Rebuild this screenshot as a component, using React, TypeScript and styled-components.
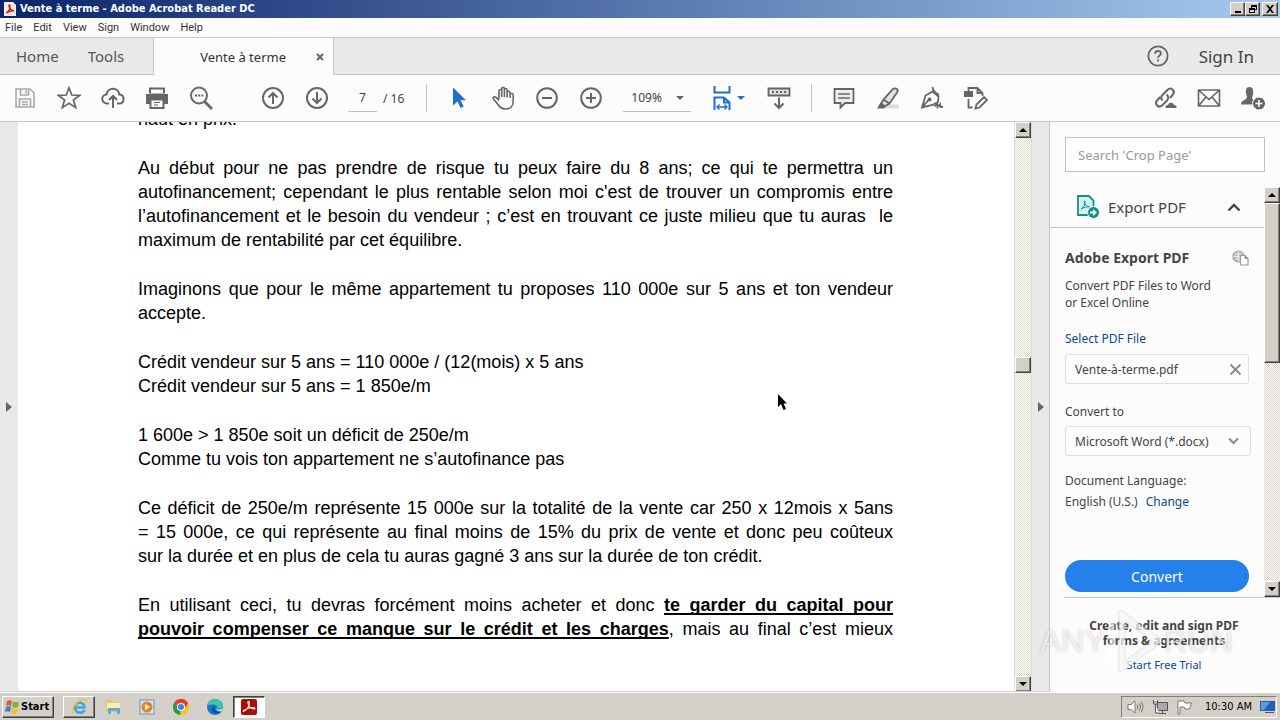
import React from 'react';
import styled, { createGlobalStyle, css } from 'styled-components';

const ui = `'Noto Sans', 'Open Sans', sans-serif`;
const classic = `'DejaVu Sans Condensed', 'DejaVu Sans', sans-serif`;

const GlobalStyle = createGlobalStyle`
  * { box-sizing: border-box; }
  body { margin: 0; background: #fff; font-family: ${ui}; color: #444; }
  button, input, select { font: inherit; color: inherit; margin: 0; padding: 0; border: 0; background: none; border-radius: 0; }
  a { text-decoration: none; }
  p, h2, h3 { margin: 0; }
  svg { display: block; flex: none; }
`;

const Desktop = styled.div`
  display: flex;
  flex-direction: column;
  height: 100vh;
  overflow: hidden;
`;

const raised = css`
  background: #d4d0c8;
  border: 1px solid;
  border-color: #fff #404040 #404040 #fff;
  box-shadow: inset -1px -1px 0 #808080;
`;

/* Window frame */
const TitleBar = styled.header`
  display: flex;
  align-items: center;
  gap: 4px;
  height: 18px;
  padding: 0 2px 0 4px;
  background: linear-gradient(90deg, #0a246a, #a6caf0);
  color: #fff;
  font: bold 11px/18px ${classic};
`;
const TitleText = styled.span`
  flex: 1;
`;
const Captions = styled.div`
  display: flex;
`;
const CaptionButton = styled.button<{ $apart?: boolean }>`
  ${raised}
  display: grid;
  place-items: center;
  width: ${p => (p.$apart ? 16 : 15)}px;
  height: 14px;
  margin-left: ${p => (p.$apart ? 2 : 0)}px;
`;

const MenuBar = styled.nav`
  display: flex;
  gap: 11px;
  height: 20px;
  padding: 0 5px;
  background: #fcfcfc;
  border-bottom: 1px solid #c8c8c8;
`;
const MenuItem = styled.button`
  font: 11px/19px Roboto, ${ui};
  color: #333;
`;

/* Tabs */
const TabStrip = styled.div`
  display: flex;
  height: 37px;
  background: #e9e9e9;
`;
const Fill = styled.div`
  flex: 1;
`;
const TabEdge = styled.div`
  display: flex;
  align-items: center;
  border-bottom: 1px solid #c6c6c6;
`;
const AppTabs = styled(TabEdge)`
  width: 154px;
  gap: 29px;
  padding-left: 16px;
  border-right: 1px solid #c6c6c6;
`;
const AppTab = styled.button`
  font-size: 15px;
  color: #555;
`;
const DocTab = styled.div`
  display: flex;
  align-items: center;
  justify-content: flex-end;
  gap: 30px;
  width: 180px;
  padding-right: 9px;
  background: #fcfcfc;
  border-right: 1px solid #c6c6c6;
  font-size: 13px;
  color: #333;
`;
const CloseTab = styled.button`
  color: #666;
`;
const Account = styled(TabEdge)`
  flex: 1;
  justify-content: flex-end;
  gap: 30px;
  padding-right: 26px;
  font-size: 17px;
  color: #444;
`;
const HelpButton = styled.button`
  color: #666;
`;

/* Toolbar */
const Toolbar = styled.div`
  display: flex;
  align-items: center;
  height: 47px;
  padding: 0 5px 0 3px;
  background: #fcfcfc;
  border-bottom: 1px solid #c6c6c6;
  color: #666;
`;
const Tool = styled.button<{ $tone?: string }>`
  display: grid;
  place-items: center;
  width: 44px;
  height: 40px;
  color: ${p => p.$tone || '#666'};
`;
const ToolGroup = styled.div<{ $before?: number }>`
  display: flex;
  align-items: center;
  margin-left: ${p => p.$before || 0}px;
`;
const Divider = styled.div`
  width: 1px;
  height: 28px;
  margin: 0 10px;
  background: #c6c6c6;
`;
const PageBox = styled.label`
  display: flex;
  align-items: center;
  gap: 6px;
  margin: 0 12px 0 9px;
  font-size: 12px;
  color: #444;
`;
const PageInput = styled.input`
  width: 29px;
  height: 27px;
  text-align: center;
  border-bottom: 1px solid #c0c0c0;
`;
const ZoomBox = styled.div`
  display: flex;
  align-items: center;
  width: 68px;
  height: 27px;
  padding-right: 7px;
  margin: 0 16px 0 10px;
  border-bottom: 1px solid #c0c0c0;
`;
const ZoomSelect = styled.select`
  flex: 1;
  min-width: 0;
  appearance: none;
  padding-left: 8px;
  font-size: 12px;
  color: #444;
`;
const FitTool = styled(Tool)`
  display: flex;
  align-items: center;
  justify-content: center;
  gap: 6px;
`;

/* Work area */
const WorkArea = styled.div`
  display: flex;
  flex: 1;
  min-height: 0;
`;
const Rail = styled.button<{ $line?: boolean }>`
  display: grid;
  place-items: center;
  flex: none;
  width: 18px;
  background: #e9e9e9;
  ${p => p.$line && 'border-right: 1px solid #c6c6c6;'}
`;
const PageView = styled.main`
  flex: 1;
  min-width: 0;
  overflow: hidden;
  padding: 0 121px 0 120px;
  background: #fff;
`;
const PageText = styled.article`
  display: flex;
  flex-direction: column;
  gap: 25px;
  margin-top: -15px;
  font: 18px/24px 'Liberation Sans', Arial, sans-serif;
  color: #000;
`;
const Line = styled.span<{ $justify?: boolean }>`
  display: block;
  white-space: nowrap;
  ${p => p.$justify && 'text-align: justify; text-align-last: justify; white-space: normal;'}
`;
const Strong = styled.strong`
  text-decoration: underline;
  text-decoration-thickness: 2px;
  text-decoration-skip-ink: none;
  text-underline-offset: 2px;
`;

const ScrollTrack = styled.div<{ $tint?: string }>`
  display: flex;
  flex-direction: column;
  flex: none;
  width: 16px;
  background: repeating-conic-gradient(${p => p.$tint || '#dedccf'} 0 25%, #fff 0 50%) 0 0 / 2px 2px;
`;
const ScrollButton = styled.button`
  ${raised}
  display: grid;
  place-items: center;
  height: 16px;
`;
const Thumb = styled.div<{ $size: number }>`
  ${raised}
  height: ${p => p.$size}px;
`;
const Space = styled.div<{ $grow: number }>`
  flex: ${p => p.$grow} 1 0;
`;
const PageScroll = styled(ScrollTrack)`
  width: 18px;
  border-left: 1px solid #dcdcdc;
  border-right: 1px solid #dcdcdc;
`;

/* Tools panel */
const Panel = styled.aside`
  position: relative;
  display: flex;
  flex-direction: column;
  flex: none;
  width: 230px;
  background: #fcfcfc;
  font-size: 12px;
  line-height: 17px;
`;
const SearchInput = styled.input`
  flex: none;
  height: 35px;
  margin: 15px;
  padding: 0 12px;
  background: #fff;
  border: 1px solid #c0c0c0;
  font-size: 13px;
  &::placeholder { color: #999; opacity: 1; }
`;
const PanelScroll = styled.div`
  display: flex;
  flex: none;
  height: 410px;
`;
const PanelBody = styled.div`
  display: flex;
  flex-direction: column;
  flex: 1;
`;
const SectionHead = styled.button`
  display: flex;
  align-items: center;
  flex: none;
  height: 41px;
  padding: 0 23px 0 26px;
  border-bottom: 1px solid #c6c6c6;
  font-size: 15px;
  color: #444;
`;
const SectionName = styled.span`
  flex: 1;
  padding-left: 8px;
  text-align: left;
`;
const Form = styled.form`
  display: flex;
  flex-direction: column;
  align-items: stretch;
  flex: 1;
  padding: 21px 15px 0;
`;
const TitleRow = styled.div`
  display: flex;
  align-items: center;
  justify-content: space-between;
  margin-bottom: 11px;
`;
const Title = styled.h2`
  font-size: 14px;
  line-height: 17px;
  color: #444;
`;
const Link = styled.a`
  color: #0a4a8f;
`;
const FileRow = styled.div`
  display: flex;
  align-items: center;
  justify-content: space-between;
  height: 30px;
  margin: 7px 0 19px;
  padding: 0 6px 0 9px;
  border: 1px solid #dedede;
  border-radius: 3px;
`;
const FormatBox = styled.div`
  display: flex;
  align-items: center;
  height: 30px;
  margin: 6px -2px 16px 0;
  padding: 0 11px 0 9px;
  border: 1px solid #dedede;
  border-radius: 3px;
`;
const FormatSelect = styled.select`
  flex: 1;
  min-width: 0;
  appearance: none;
  font-size: 12px;
`;
const SelectLink = styled(Link)`
  margin-top: 19px;
`;
const LanguageRow = styled.div`
  display: flex;
  gap: 8px;
  margin-top: 4px;
`;
const ConvertButton = styled.button`
  flex: none;
  height: 32px;
  margin-top: 50px;
  border-radius: 16px;
  background: #2680eb;
  color: #fff;
  font-size: 14px;
`;
const Promo = styled.section`
  flex: 1;
  margin-left: 14px;
  padding: 20px 16px 0 0;
  border-top: 1px solid #c6c6c6;
  text-align: center;
`;
const PromoTitle = styled.h3`
  font-size: 12px;
  line-height: 15px;
  margin-bottom: 8px;
  color: #444;
`;
const TrialLink = styled(Link)`
  font-size: 11px;
`;
const Watermark = styled.div`
  position: absolute;
  left: -10px;
  bottom: 19px;
  display: flex;
  align-items: center;
  gap: 2px;
  pointer-events: none;
  font: 32px/64px 'Liberation Sans Narrow', 'Liberation Sans', sans-serif;
  color: rgba(255, 255, 255, 0.6);
  text-shadow: 0 0 3px rgba(0, 0, 0, 0.2);
`;

/* Taskbar */
const Taskbar = styled.footer`
  display: flex;
  align-items: center;
  flex: none;
  height: 28px;
  padding: 0 3px 0 2px;
  background: #d4d0c8;
  border-top: 1px solid #fff;
  box-shadow: 0 -1px 0 #d4d0c8;
  font: 11px/14px ${classic};
  color: #000;
`;
const StartButton = styled.button`
  ${raised}
  display: flex;
  align-items: center;
  width: 52px;
  height: 22px;
  margin-right: 9px;
  padding-left: 1px;
  font-weight: bold;
  font-size: 11px;
`;
const TaskButton = styled.button<{ $look?: 'up' | 'down' }>`
  display: grid;
  place-items: center;
  width: 32px;
  height: 22px;
  margin-right: 2px;
  ${p => p.$look === 'up' && raised}
  ${p => p.$look === 'down' && css`
    background: #fff;
    border: 1px solid;
    border-color: #404040 #fff #fff #404040;
    box-shadow: inset 1px 1px 0 #808080;
  `}
`;
const Tray = styled.div`
  display: flex;
  align-items: center;
  gap: 8px;
  height: 22px;
  padding: 0 1px 0 5px;
  border: 1px solid;
  border-color: #808080 #fff #fff #808080;
`;
const Clock = styled.time`
  margin-left: 4px;
`;

const Pointer = styled.svg`
  position: absolute;
  left: 777px;
  top: 393px;
`;

type G = { children: React.ReactNode; w?: number; h?: number; box?: string; sw?: number };
const Glyph = ({ children, w = 24, h = 24, box = '0 0 24 24', sw = 2 }: G) => (
  <svg width={w} height={h} viewBox={box} fill="none" stroke="currentColor" strokeWidth={sw} aria-hidden="true">
    {children}
  </svg>
);
const Tri = ({ d, w, h, c = '#666' }: { d: string; w: number; h: number; c?: string }) => (
  <svg width={w} height={h} viewBox={`0 0 ${w} ${h}`} fill={c} aria-hidden="true"><path d={d} /></svg>
);
const Up = () => <Tri w={8} h={4} c="#000" d="M0 4L4 0l4 4z" />;
const Down = () => <Tri w={8} h={4} c="#000" d="M0 0h8L4 4z" />;

const acrobatLoop = 'M3 12c2-1 5-4 5.500-8C8.500 2 6.500 2 7 4c.5 3 3 5.500 6 6 1.500 0 1-1.500-1-1.500-3 0-6 1-8.500 2.500C2 12 2 13 3 12z';

const ICONS = {
  save: (
    <Glyph sw={1.6}><path d="M3 3h14l4 4v14H3zM7.500 3v6h8V3M6.500 21v-8h11v8M13 4.500v3M9 16h6M9 18.500h6" /></Glyph>
  ),
  star: <Glyph sw={1.7}><path d="M12 1.800l2.700 7.200 8 .3-6.300 4.800 2.300 7.500L12 17.300l-6.700 4.300 2.300-7.500L1.300 9.300l8-.3z" /></Glyph>,
  cloud: (
    <Glyph><path d="M8 17.500H6a4.500 4.500 0 0 1-.5-9C6 5 9 2.800 12 2.800c3.500 0 6 2.500 6.300 5.700 6 .5 5.500 9-.3 9h-2M12 22V10M8 14l4-4 4 4" /></Glyph>
  ),
  print: (
    <Glyph>
      <path d="M4 1.500h16v6H4zM1 8h22v10h-4v-4H5v4H1z" fill="currentColor" stroke="none" />
      <path d="M6 3.500h12V7H6z" fill="#fcfcfc" stroke="none" />
      <path d="M5.500 13.500h13v8.500h-13z" fill="#fcfcfc" />
      <path d="M9 16.500h6M9 19h4" strokeWidth="1.200" />
    </Glyph>
  ),
  find: (
    <Glyph><circle cx="10" cy="9.500" r="8" /><path d="M15.500 15.500L23 23" strokeWidth="2.800" /><path d="M6 9.500h2M9.200 9.500h2M12.400 9.500h2" /></Glyph>
  ),
  up: <Glyph><circle cx="12" cy="12" r="10" /><path d="M12 18V7M7.500 11.500L12 7l4.500 4.500" /></Glyph>,
  down: <Glyph><circle cx="12" cy="12" r="10" /><path d="M12 6v11M7.500 12.500L12 17l4.500-4.500" /></Glyph>,
  arrow: <Glyph><path d="M6 1.500v18l4.500-4 3.200 6.500 3-1.400-3.200-6.300H19z" fill="currentColor" stroke="none" /></Glyph>,
  hand: (
    <Glyph sw={1.6}>
      <path d="M8 13V5c0-2 2.700-2 2.700 0v6M10.700 5V2.800c0-1.900 2.700-1.900 2.700 0V11M13.400 4c0-2 2.700-2 2.700 0v7.500M16.100 6.500c.3-1.800 2.900-1.600 2.900.3V12M19 8.500c.8-1.600 3.200-1.200 3.200.8V15c0 5-3 8-7.500 8-4 0-6-1.500-7.700-4.500L2.500 13c-1-1.700 1-3 2.500-1.600L8 14.500" />
    </Glyph>
  ),
  minus: <Glyph><circle cx="12" cy="12" r="9.800" /><path d="M7 12h10" /></Glyph>,
  plus: <Glyph><circle cx="12" cy="12" r="9.800" /><path d="M7 12h10M12 7v10" /></Glyph>,
  fit: (
    <Glyph w={18} h={26} box="0 0 18 26">
      <path d="M1.500 1v6.500h15V1M1.500 25V12.500h9.500l5.500 5V25M11 12.500v5h5.500" />
      <path d="M4 22h10M6.500 19.500L4 22l2.500 2.500M11.500 19.500L14 22l-2.500 2.500" strokeWidth="1.400" />
    </Glyph>
  ),
  keyboard: (
    <Glyph>
      <path d="M1.500 2.500h21v7h-21z" fill="#ddd" strokeWidth="1.800" /><path d="M5 6h2M9 6h2M13 6h2M17 6h2M12 11.500v10M7.500 17.500L12 22l4.500-4.500" />
    </Glyph>
  ),
  note: <Glyph sw={1.8}><path d="M2.500 3h19v14H13l-4.500 4.500V17h-6z" fill="#eee" /><path d="M6 8h12M6 12h12" strokeWidth="1.400" /></Glyph>,
  mark: (
    <Glyph sw={1.8}>
      <path d="M10 18.500h13v4H7z" fill="#ddd" stroke="none" />
      <path d="M16.500 3.500c3-2.500 6.500-.2 4.500 3L13.500 17.500 7.500 13.500zM7.500 13.500l-2.300 4.200 3.600 2.500 4.700-2.700" fill="#e2e2e2" />
      <path d="M4.500 16.500l5 4-1.500 2H1z" fill="currentColor" stroke="none" />
    </Glyph>
  ),
  sign: (
    <Glyph sw={1.8}>
      <path d="M12.500 1c.3 3 1.500 5.500 6.500 7.500M12.500 5.500L5.500 9.500 2 21.500l10.500-2.500 5.500-3 .5-5.500zM2 21.500l6.500-7.500" /><circle cx="9.500" cy="13.500" r="1" />
      <path d="M14.500 20.500l2.500-3 .5 3.500 2.500-3 .5 3H23" />
    </Glyph>
  ),
  edit: (
    <Glyph sw={1.8}>
      <path d="M0 5h9v6H0z" fill="currentColor" stroke="none" /><path d="M4.500 5V2h9l5 5v3M13.500 2v5h5M4.500 13v8.500H8.500M11.500 22.500l1-4 7.500-7.500 3 3-7.500 7.500z" />
    </Glyph>
  ),
  link: (
    <Glyph>
      <path d="M9.500 14.500c-2-2-1.500-4 .2-5.700l5-5c3-3 8 .6 5.300 4.700l-3 3.500M13.500 8.500c2.500 1.800 2 4.300.5 6l-5 5c-3.500 3-8-1.500-5-5L7 11" />
      <path d="M12 22.500h12c.5-3-1.500-4-3-4-1-3-5-3-6 0-2 0-3.500 1.500-3 4z" fill="currentColor" stroke="#fcfcfc" strokeWidth="1" />
    </Glyph>
  ),
  mail: <Glyph sw={1.6}><path d="M1.500 4h21v16h-21zM1.500 4L12 13.500 22.500 4M1.500 20l7.500-9M22.500 20L15 11" /></Glyph>,
  person: (
    <Glyph>
      <path d="M8.500 1C5 1 4.500 4 5 7c.3 2 1 3 1 4.500C5.500 14 0 14 0 18.500h15L11 12c.5-2 1-3 1.200-5 .3-3-.7-6-3.700-6z" fill="currentColor" stroke="none" />
      <circle cx="18" cy="17.500" r="6.500" fill="currentColor" stroke="#fcfcfc" strokeWidth="1" /><path d="M14.500 17.500h7M18 14v7" stroke="#fcfcfc" strokeWidth="1.600" />
    </Glyph>
  ),
};

const Reader = ({ size }: { size: number }) => (
  <svg width={size} height={size} viewBox="0 0 16 16" aria-hidden="true">
    <rect width="16" height="16" rx="2" fill="#b30b00" />
    <path d={acrobatLoop} fill="none" stroke="#fff" strokeWidth="1.200" />
  </svg>
);

const menus = ['File', 'Edit', 'View', 'Sign', 'Window', 'Help'];

type TextLine = { text: string; full?: boolean };
const full = (text: string): TextLine => ({ text, full: true });
const short = (text: string): TextLine => ({ text });

const paragraphs: TextLine[][] = [
  [short('haut en prix.')],
  [
    full('Au début pour ne pas prendre de risque tu peux faire du 8 ans; ce qui te permettra un'),
    full("autofinancement; cependant le plus rentable selon moi c'est de trouver un compromis entre"),
    full('l’autofinancement et le besoin du vendeur ; c’est en trouvant ce juste milieu que tu auras \u00a0le'),
    short('maximum de rentabilité par cet équilibre.'),
  ],
  [full('Imaginons que pour le même appartement tu proposes 110 000e sur 5 ans et ton vendeur'), short('accepte.')],
  [short('Crédit vendeur sur 5 ans = 110 000e / (12(mois) x 5 ans'), short('Crédit vendeur sur 5 ans = 1 850e/m')],
  [short('1 600e > 1 850e soit un déficit de 250e/m'), short('Comme tu vois ton appartement ne s’autofinance pas')],
  [
    full('Ce déficit de 250e/m représente 15 000e sur la totalité de la vente car 250 x 12mois x 5ans'),
    full('= 15 000e, ce qui représente au final moins de 15% du prix de vente et donc peu coûteux'),
    short('sur la durée et en plus de cela tu auras gagné 3 ans sur la durée de ton crédit.'),
  ],
];

export default function App() {
  return (
    <Desktop>
      <GlobalStyle />
      <TitleBar>
        <svg width="12" height="14" viewBox="0 0 12 14" aria-hidden="true">
          <path d="M0 0h9l3 3v11H0z" fill="#fbeaea" />
          <path d="M2 11c2-1 4-4 4-7 0-1.500-1.500-1.500-1 0 .5 2.500 2.500 4.500 5 5-2-.5-5 .5-8 2z" fill="none" stroke="#d3120c" strokeWidth="1.300" />
        </svg>
        <TitleText>Vente à terme - Adobe Acrobat Reader DC</TitleText>
        <Captions>
          <CaptionButton aria-label="Minimize"><Tri w={8} h={8} c="#000" d="M1 6h6v2H1z" /></CaptionButton>
          <CaptionButton aria-label="Restore">
            <Tri w={8} h={8} c="#000" d="M2 0h6v5H6V8H0V3h2zM3 2v1h3v1h1V2zM1 5v2h4V5z" />
          </CaptionButton>
          <CaptionButton $apart aria-label="Close"><Tri w={8} h={8} c="#000" d="M0 0h2l2 2.500L6 0h2L5 4l3 4H6L4 5.500 2 8H0l3-4z" /></CaptionButton>
        </Captions>
      </TitleBar>
      <MenuBar>{menus.map(m => <MenuItem key={m}>{m}</MenuItem>)}</MenuBar>

      <TabStrip>
        <AppTabs>
          <AppTab>Home</AppTab>
          <AppTab>Tools</AppTab>
        </AppTabs>
        <DocTab>
          <span>Vente à terme</span>
          <CloseTab aria-label="Close tab"><Glyph w={8} h={8} box="0 0 8 8"><path d="M1 1l6 6M7 1L1 7" /></Glyph></CloseTab>
        </DocTab>
        <Account>
          <HelpButton aria-label="Help">
            <Glyph w={22} h={22} sw={2}>
              <circle cx="12" cy="12" r="10.500" />
              <path d="M8.800 9.500c0-4 6.400-3.800 6.400-.3 0 2.300-3.200 2.300-3.200 4.800M12 15.500V18" />
            </Glyph>
          </HelpButton>
          <button>Sign In</button>
        </Account>
      </TabStrip>

      <Toolbar>
        <ToolGroup>
          <Tool $tone="#a8a8a8" aria-label="Save">{ICONS.save}</Tool>
          <Tool aria-label="Star">{ICONS.star}</Tool>
          <Tool aria-label="Upload">{ICONS.cloud}</Tool>
          <Tool aria-label="Print">{ICONS.print}</Tool>
          <Tool aria-label="Find">{ICONS.find}</Tool>
        </ToolGroup>
        <ToolGroup $before={28}>
          <Tool aria-label="Previous page">{ICONS.up}</Tool>
          <Tool aria-label="Next page">{ICONS.down}</Tool>
        </ToolGroup>
        <PageBox>
          <PageInput defaultValue="7" aria-label="Page number" />
          <span>/ 16</span>
        </PageBox>
        <Divider />
        <ToolGroup>
          <Tool $tone="#1f6fd0" aria-label="Select">{ICONS.arrow}</Tool>
          <Tool aria-label="Pan">{ICONS.hand}</Tool>
          <Tool aria-label="Zoom out">{ICONS.minus}</Tool>
          <Tool aria-label="Zoom in">{ICONS.plus}</Tool>
        </ToolGroup>
        <ZoomBox>
          <ZoomSelect aria-label="Zoom level"><option>109%</option></ZoomSelect>
          <Tri w={8} h={4} d="M0 0h8L4 4z" />
        </ZoomBox>
        <FitTool $tone="#1f6fd0" aria-label="Fit width">{ICONS.fit}<Tri w={8} h={4} c="#1f6fd0" d="M0 0h8L4 4z" /></FitTool>
        <ToolGroup $before={6}><Tool aria-label="Read mode">{ICONS.keyboard}</Tool></ToolGroup>
        <Divider />
        <ToolGroup>
          <Tool aria-label="Comment">{ICONS.note}</Tool>
          <Tool aria-label="Highlight">{ICONS.mark}</Tool>
          <Tool aria-label="Sign">{ICONS.sign}</Tool>
          <Tool aria-label="Edit">{ICONS.edit}</Tool>
        </ToolGroup>
        <Fill />
        <ToolGroup>
          <Tool aria-label="Share link">{ICONS.link}</Tool>
          <Tool aria-label="Email">{ICONS.mail}</Tool>
          <Tool aria-label="Add people">{ICONS.person}</Tool>
        </ToolGroup>
      </Toolbar>

      <WorkArea>
        <Rail aria-label="Open navigation"><Tri w={6} h={10} d="M0 0l6 5-6 5z" /></Rail>
        <PageView>
          <PageText>
            {paragraphs.map((lines, i) => (
              <p key={i}>
                {lines.map(l => <Line key={l.text} $justify={l.full}>{l.text}</Line>)}
              </p>
            ))}
            <p>
              <Line $justify>En utilisant ceci, tu devras forcément moins acheter et donc <Strong>te garder du capital pour</Strong></Line>
              <Line $justify><Strong>pouvoir compenser ce manque sur le crédit et les charges</Strong>, mais au final c’est mieux</Line>
            </p>
          </PageText>
        </PageView>
        <PageScroll>
          <ScrollButton aria-label="Scroll up"><Up /></ScrollButton>
          <Space $grow={219} />
          <Thumb $size={16} />
          <Space $grow={303} />
          <ScrollButton aria-label="Scroll down"><Down /></ScrollButton>
        </PageScroll>
        <Rail $line aria-label="Close tools pane"><Tri w={6} h={10} d="M0 0l6 5-6 5z" /></Rail>
        <Panel>
          <SearchInput type="text" aria-label="Search tools" placeholder="Search 'Crop Page'" />
          <PanelScroll>
            <PanelBody>
              <SectionHead>
                <svg width="24" height="26" viewBox="0 0 24 26" fill="none" aria-hidden="true">
                  <path d="M2 2h11l4.500 4.500V21H2z" fill="#d5f0f2" stroke="#12908c" strokeWidth="1.800" />
                  <path d="M5 15c2-1 4-4 4-7.500 0-1-1-1-.8.300.5 2.500 2.500 5 5.300 5-3-.3-6 .7-8.500 2.200z" stroke="#12908c" />
                  <circle cx="17.500" cy="18.500" r="6" fill="#12908c" stroke="#fcfcfc" />
                  <path d="M14 17.500h3V15l4 3.500-4 3.500v-2.500h-3z" fill="#fff" />
                </svg>
                <SectionName>Export PDF</SectionName>
                <Glyph w={14} h={9} box="0 0 14 9" sw={2.4}><path d="M1.500 7.500L7 2l5.500 5.500" /></Glyph>
              </SectionHead>
              <Form onSubmit={e => e.preventDefault()}>
                <TitleRow>
                  <Title>Adobe Export PDF</Title>
                  <svg width="17" height="16" viewBox="0 0 17 16" fill="none" stroke="#999" strokeWidth="1.200" aria-hidden="true">
                    <circle cx="6.500" cy="6.500" r="5.500" fill="#c4c4c4" />
                    <path d="M1 6.500h11M6.500 1v11M3 3c2 2 5 2 7 0M3 10c2-2 5-2 7 0" stroke="#eee" strokeWidth="0.800" />
                    <path d="M8.500 5.500h4.500l3 3V15H8.500zM13 5.500v3h3" fill="#fcfcfc" />
                  </svg>
                </TitleRow>
                <p>Convert PDF Files to Word<br />or Excel Online</p>
                <SelectLink href="#select">Select PDF File</SelectLink>
                <FileRow>
                  <span>Vente-à-terme.pdf</span>
                  <button type="button" aria-label="Remove file"><Glyph w={13} h={13} box="0 0 13 13" sw={1.8}><path d="M1.500 1.500l10 10M11.500 1.500l-10 10" stroke="#888" /></Glyph></button>
                </FileRow>
                <label htmlFor="format">Convert to</label>
                <FormatBox>
                  <FormatSelect id="format"><option>Microsoft Word (*.docx)</option></FormatSelect>
                  <Glyph w={11} h={8} box="0 0 11 8"><path d="M1 1.500L5.500 6 10 1.500" stroke="#888" /></Glyph>
                </FormatBox>
                <span>Document Language:</span>
                <LanguageRow><span>English (U.S.)</span><Link href="#language">Change</Link></LanguageRow>
                <ConvertButton>Convert</ConvertButton>
              </Form>
            </PanelBody>
            <ScrollTrack $tint="#dcd4cc">
              <ScrollButton aria-label="Scroll up"><Up /></ScrollButton>
              <Thumb $size={160} />
              <Space $grow={1} />
              <ScrollButton aria-label="Scroll down"><Down /></ScrollButton>
            </ScrollTrack>
          </PanelScroll>
          <Promo>
            <PromoTitle>Create, edit and sign PDF<br />forms &amp; agreements</PromoTitle>
            <TrialLink href="#trial">Start Free Trial</TrialLink>
          </Promo>
          <Watermark aria-hidden="true">
            <span>ANY</span>
            <svg width="54" height="62" viewBox="0 0 54 62" fill="none" stroke="#fff" strokeOpacity="0.600" strokeWidth="5">
              <path d="M14 5v52l36-26z" stroke="#ccc" strokeOpacity="0.350" strokeWidth="8" />
              <path d="M14 5v52l36-26zM4 10v42" />
            </svg>
            <span>RUN</span>
          </Watermark>
        </Panel>
      </WorkArea>

      <Taskbar>
        <StartButton>
          <svg width="17" height="16" viewBox="0 0 17 16" aria-hidden="true">
            <path d="M3 2c2-1 3-1 5 0L7 7C5 6 4 6 2 7z" fill="#e8562a" /><path d="M9 2.500c2 1 4 1 6 0L14 8c-2 1-4 1-6 0z" fill="#7db43c" />
            <path d="M2 8c2-1 3-1 5 0l-1 5c-2-1-3-1-5 0z" fill="#3a7fd0" /><path d="M8 9c2 1 4 1 6 0l-1 5c-2 1-4 1-6 0z" fill="#f5bd2c" />
          </svg>
          Start
        </StartButton>
        <TaskButton $look="up" aria-label="Internet Explorer">
          <svg width="18" height="18" viewBox="0 0 18 18" fill="none" aria-hidden="true">
            <path d="M14.500 12c-2 4-9.500 3.500-9.500-2.500S14.500 3 14.500 9.500H5" stroke="#3ba7e8" strokeWidth="2.600" />
            <path d="M3 15.500C-1 14 8-1 15.500 2c1 .5 1 1.500.5 3" stroke="#f0c030" strokeWidth="1.500" />
          </svg>
        </TaskButton>
        <TaskButton aria-label="File Explorer">
          <svg width="17" height="17" viewBox="0 0 17 17" aria-hidden="true">
            <path d="M1 2h5l1 2h8v10H1z" fill="#e9c766" /><path d="M2 5h13v6H2z" fill="#fbeeb0" /><path d="M3 16v-6h12v6h-3v-3H6v3z" fill="#5fabd8" />
          </svg>
        </TaskButton>
        <TaskButton aria-label="Media Player">
          <svg width="16" height="16" viewBox="0 0 16 16" aria-hidden="true">
            <rect x="1" y="1" width="14" height="14" fill="#cfe4f5" stroke="#5b96c8" /><circle cx="8" cy="8" r="5.500" fill="#f08018" /><path d="M6 5l5 3-5 3z" fill="#fff" />
          </svg>
        </TaskButton>
        <TaskButton aria-label="Chrome">
          <svg width="16" height="16" viewBox="0 0 16 16" aria-hidden="true">
            <circle cx="8" cy="8" r="8" fill="#fbc116" /><path d="M8 8L1 4a8 8 0 0 1 14 0z" fill="#e33b2e" /><path d="M8 8l-1 8A8 8 0 0 1 1 4z" fill="#2b9b48" />
            <path d="M8 4h7l-2 4H8z" fill="#e33b2e" /><circle cx="8" cy="8" r="4" fill="#fff" /><circle cx="8" cy="8" r="3" fill="#3f7ee8" />
          </svg>
        </TaskButton>
        <TaskButton aria-label="Edge">
          <svg width="16" height="16" viewBox="0 0 16 16" aria-hidden="true">
            <circle cx="8" cy="8" r="8" fill="#1577c8" /><path d="M0 7C1-2 15-2 16 6.500c0 3-4 4.500-6 2.500 1-2-1-4-4-3.500C3 5.500 1 6 0 7z" fill="#3cc6b0" />
            <path d="M8 7c-2 3 1 6.500 6.500 5.500C12 15 6 15 5 11c-.5-2 1-4 3-4z" fill="#0c4f9c" /><path d="M9 9c1 2 4 2.500 7 0l-1 3c-3 1-6 0-6-3z" fill="#d4d0c8" />
          </svg>
        </TaskButton>
        <TaskButton $look="down" aria-label="Adobe Acrobat Reader"><Reader size={16} /></TaskButton>
        <Fill />
        <Tray>
          <svg width="17" height="16" viewBox="0 0 17 16" fill="none" stroke="#777" aria-hidden="true">
            <path d="M1 5.500h3L8 2v12l-4-3.500H1z" fill="#fff" /><path d="M10 5.500c1 1.500 1 3.500 0 5M12 4c2 2.500 2 5.500 0 8M14 2.500c2.500 3.500 2.500 7.500 0 11" />
          </svg>
          <svg width="16" height="16" viewBox="0 0 16 16" fill="none" stroke="#555" aria-hidden="true">
            <path d="M5.500 3.500h10v8h-10zM7 14.500h7M10.500 12v2" fill="#aaa" /><path d="M1.500 1v4h4V1M3.500 5v9H7M1.500 3h4" fill="#fff" />
          </svg>
          <svg width="17" height="16" viewBox="0 0 17 16" stroke="#777" aria-hidden="true"><path d="M2 15V2h6l1 2h6.500l-2 6H9L8 8H4v7z" fill="#fff" /></svg>
          <Clock>10:30 AM</Clock>
          <svg width="15" height="14" viewBox="0 0 15 14" aria-hidden="true">
            <path d="M0 1h15v10H0z" fill="#1c62bd" /><path d="M1 2h9L4 10H1z" fill="#5b9be0" /><path d="M5 12h9v1H5z" fill="#555" />
          </svg>
        </Tray>
      </Taskbar>
      <Pointer width="11" height="18" viewBox="0 0 11 18" aria-hidden="true">
        <path d="M1 1v13l3-3 2.500 6 2.500-1-2.500-5.500H10z" fill="#000" />
      </Pointer>
    </Desktop>
  );
}
